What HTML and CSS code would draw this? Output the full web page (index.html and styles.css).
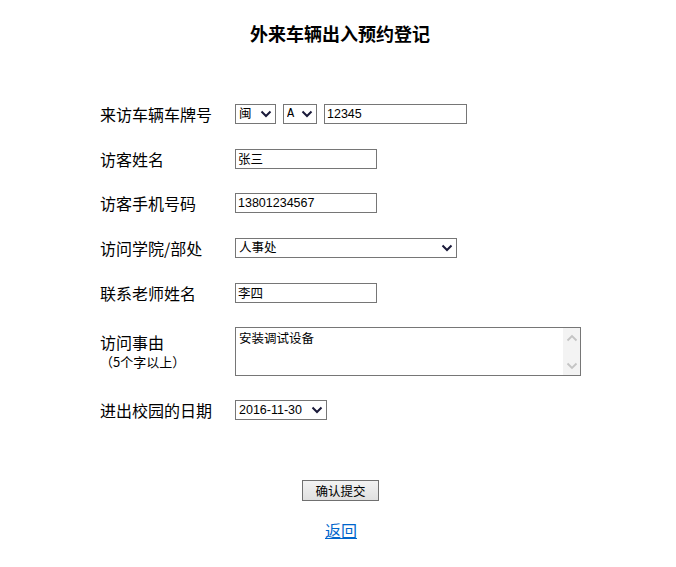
FILE: index.html
```html
<!DOCTYPE html>
<html lang="zh-CN">
<head>
<meta charset="utf-8">
<title>外来车辆出入预约登记</title>
<link rel="stylesheet" href="styles.css">
</head>
<body>
<h1 class="title">外来车辆出入预约登记</h1>
<form class="form">
  <div class="row r1">
    <div class="label">来访车辆车牌号</div>
    <div class="field">
      <span class="sel w40"><select><option>闽</option></select><svg class="chev" viewBox="0 0 12 8"><path d="M1.5 1.5 L6 6 L10.5 1.5" /></svg></span>
      <span class="sel w33"><select class="mono"><option>A</option></select><svg class="chev" viewBox="0 0 12 8"><path d="M1.5 1.5 L6 6 L10.5 1.5" /></svg></span>
      <input class="txt plate" type="text" value="12345">
    </div>
  </div>
  <div class="row">
    <div class="label">访客姓名</div>
    <div class="field"><input class="txt short" type="text" value="张三"></div>
  </div>
  <div class="row">
    <div class="label">访客手机号码</div>
    <div class="field"><input class="txt short" type="text" value="13801234567"></div>
  </div>
  <div class="row">
    <div class="label">访问学院/部处</div>
    <div class="field"><span class="sel w222"><select><option>人事处</option></select><svg class="chev" viewBox="0 0 12 8"><path d="M1.5 1.5 L6 6 L10.5 1.5" /></svg></span></div>
  </div>
  <div class="row">
    <div class="label">联系老师姓名</div>
    <div class="field"><input class="txt short" type="text" value="李四"></div>
  </div>
  <div class="row r6">
    <div class="label"><div class="main">访问事由</div><div class="sub">（5个字以上）</div></div>
    <div class="field">
      <div class="tabox">
        <textarea class="ta">安装调试设备</textarea>
        <div class="sbar">
          <svg viewBox="0 0 12 8"><path d="M1.5 6.5 L6 2 L10.5 6.5" /></svg>
          <svg viewBox="0 0 12 8"><path d="M1.5 1.5 L6 6 L10.5 1.5" /></svg>
        </div>
      </div>
    </div>
  </div>
  <div class="row r7">
    <div class="label">进出校园的日期</div>
    <div class="field"><span class="sel w92"><select><option>2016-11-30</option></select><svg class="chev" viewBox="0 0 12 8"><path d="M1.5 1.5 L6 6 L10.5 1.5" /></svg></span></div>
  </div>
  <div class="actions">
    <button type="button" class="btn">确认提交</button>
  </div>
  <div class="back"><a href="#">返回</a></div>
</form>
</body>
</html>
```
FILE: styles.css
```css
html, body {
  margin: 0;
  padding: 0;
  background: #fff;
}
body {
  font-family: "Noto Sans CJK SC", "Liberation Sans", sans-serif;
  color: #000;
  width: 676px;
}
.title {
  margin: 0;
  padding-top: 21px;
  height: 70px;
  box-sizing: border-box;
  text-align: center;
  font-size: 18px;
  line-height: 24px;
  font-weight: bold;
  padding-left: 4px;
}
.form {
  padding-top: 22px;
  padding-left: 100px;
}
.row {
  display: flex;
  align-items: center;
  height: 44.6px;
}
.r6 {
  height: 73px;
}
.r7 {
  height: 44px;
}
.label {
  width: 135px;
  font-size: 16px;
  line-height: 20px;
  flex-shrink: 0;
}
.main {
  line-height: 18px;
}
.sub {
  font-size: 13px;
  line-height: 15px;
  margin-top: 3px;
}
.field {
  display: flex;
  align-items: center;
  gap: 7px;
}
.sel {
  position: relative;
  display: block;
  height: 20px;
}
.sel select {
  appearance: none;
  -webkit-appearance: none;
  display: block;
  box-sizing: border-box;
  width: 100%;
  height: 20px;
  border: 1px solid #767676;
  border-radius: 0;
  background: #fff;
  margin: 0;
  padding: 0 0 0 3px;
  font-family: "Liberation Sans", "Noto Sans CJK SC", sans-serif;
  font-size: 12.5px;
  color: #000;
  line-height: 18px;
}
.sel select.mono {
  font-family: "Liberation Mono", monospace;
  font-size: 12px;
}
.chev {
  position: absolute;
  right: 4px;
  top: 6px;
  width: 12px;
  height: 8px;
  fill: none;
  stroke: #1a1a3a;
  stroke-width: 2;
  pointer-events: none;
}
.w40 { width: 41px; }
.w33 { width: 34px; }
.w222 { width: 222px; }
.w92 { width: 92px; }
.txt {
  display: block;
  box-sizing: border-box;
  height: 20px;
  border: 1px solid #767676;
  border-radius: 0;
  margin: 0;
  padding: 0 2px;
  font-family: "Liberation Sans", "Noto Sans CJK SC", sans-serif;
  font-size: 12.5px;
  color: #000;
  outline: none;
}
.plate { width: 143px; }
.short { width: 142px; }
.tabox {
  display: flex;
  box-sizing: border-box;
  width: 346px;
  height: 49px;
  border: 1px solid #767676;
  background: #fff;
}
.ta {
  flex: 1;
  border: none;
  outline: none;
  resize: none;
  margin: 0;
  padding: 2px 3px;
  font-family: "Noto Sans CJK SC", sans-serif;
  font-size: 12.5px;
  line-height: 16px;
  color: #000;
  overflow: hidden;
}
.sbar {
  width: 17px;
  background: #f3f3f3;
  display: flex;
  flex-direction: column;
  justify-content: space-between;
  align-items: center;
  padding: 6px 0 5px;
}
.sbar svg {
  width: 12px;
  height: 8px;
  fill: none;
  stroke: #c4c4c4;
  stroke-width: 1.8;
}
.actions {
  margin-top: 48px;
  padding-left: 202px;
  height: 20px;
}
.btn {
  display: block;
  box-sizing: border-box;
  width: 77px;
  height: 21px;
  border: 1px solid #707070;
  border-radius: 0;
  background: linear-gradient(#f2f2f2, #e0e0e0);
  font-family: "Noto Sans CJK SC", sans-serif;
  font-size: 12.5px;
  line-height: 17px;
  padding: 0;
  color: #000;
}
.back {
  margin-top: 20px;
  padding-left: 225px;
  font-size: 16px;
  line-height: 20px;
}
.back a {
  color: #0066cc;
  text-decoration: underline;
}
```
